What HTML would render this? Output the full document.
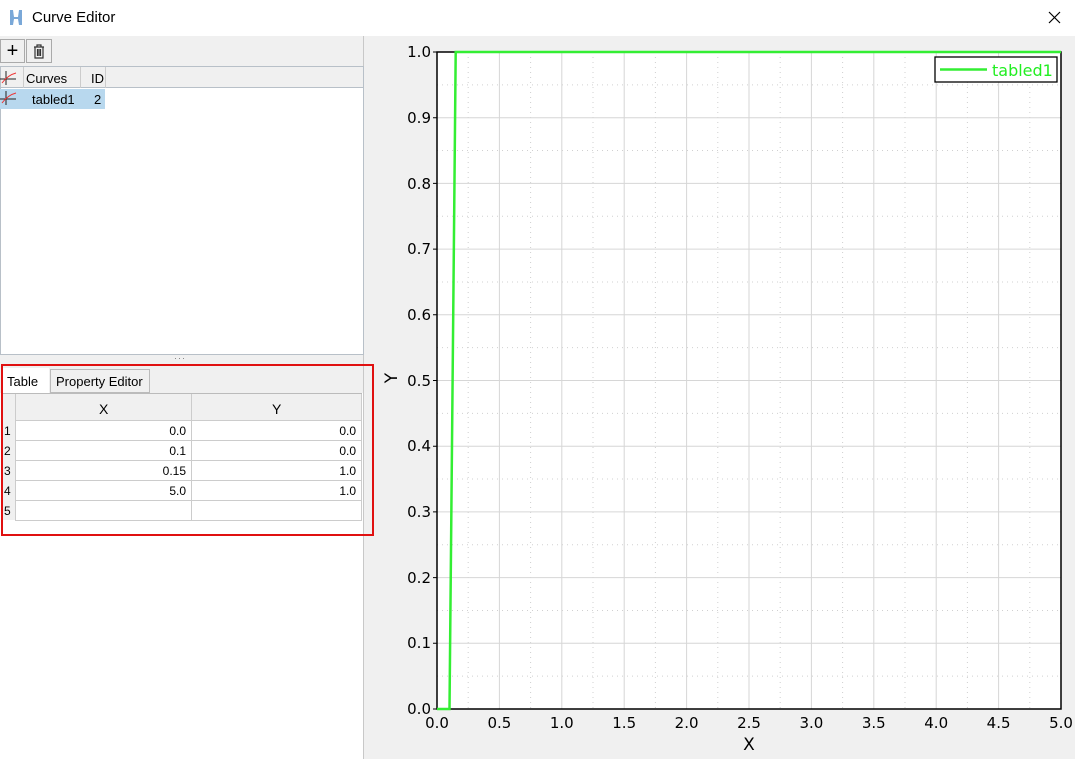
<!DOCTYPE html>
<html><head><style>
body{margin:0;width:1075px;height:759px;background:#f0f0f0;font-family:"Liberation Sans",sans-serif;position:relative;overflow:hidden}
.abs{position:absolute}
.title{left:0;top:0;width:1075px;height:36px;background:#fff}
</style></head><body>
<div class="abs title">
 <svg class="abs" style="left:9px;top:9px" width="14" height="17"><path d="M1 1 L4 1 L5 8 L9 8 L10 1 L13 1 L13 16 L10 16 L9 10 L5 10 L4 16 L1 16Z" fill="#7aa8d8"/></svg>
 <div class="abs" style="left:32px;top:9px;font-size:15px;color:#000">Curve Editor</div>
 <svg class="abs" style="left:1048px;top:11px" width="13" height="13"><path d="M1 1L12 12M12 1L1 12" stroke="#000" stroke-width="1.2"/></svg>
</div>
<div class="abs" style="left:0;top:36px;width:363px;height:723px;border-right:1px solid #c8c8c8"></div>
<div class="abs" style="left:0;top:393px;width:363px;height:366px;background:#fff;border-right:1px solid #c8c8c8"></div>
<div class="abs" style="left:0;top:39px;width:25px;height:24px;border:1px solid #aaa;box-sizing:border-box;background:#f0f0f0;font-size:20px;text-align:center;line-height:22px">+</div>
<div class="abs" style="left:26px;top:39px;width:26px;height:24px;border:1px solid #aaa;box-sizing:border-box;text-align:center">
 <svg width="14" height="16" style="margin-top:3px"><path d="M2 4H12M5 4V2H9V4M3 4V15H11V4M5.5 6V13M7 6V13M8.5 6V13" stroke="#333" fill="none" stroke-width="1.2"/></svg></div>
<div class="abs" style="left:0;top:66px;width:364px;height:289px;background:#fff;border:1px solid #b8c0c8;box-sizing:border-box"></div>
<div class="abs" style="left:0;top:66px;width:364px;height:22px;background:#f0f0f0;border:1px solid #b8c0c8;box-sizing:border-box"></div>
<div class="abs" style="left:23px;top:67px;height:21px;border-left:1px solid #ccc"></div>
<div class="abs" style="left:80px;top:67px;height:21px;border-left:1px solid #ccc"></div>
<div class="abs" style="left:105px;top:67px;height:21px;border-left:1px solid #ccc"></div>
<div class="abs" style="left:26px;top:71px;font-size:13px">Curves</div>
<div class="abs" style="left:91px;top:71px;font-size:13px">ID</div>
<div class="abs" style="left:0;top:89px;width:105px;height:20px;background:#b8d8ee"></div>
<svg class="abs" style="left:0;top:69px" width="18" height="40"><path d="M6 2V16M0 10H16" stroke="#222" fill="none"/><path d="M2 14Q8 6 16 4" stroke="#e33" fill="none"/><path d="M6 22V36M0 30H16" stroke="#222" fill="none"/><path d="M2 34Q8 26 16 24" stroke="#e33" fill="none"/></svg>
<div class="abs" style="left:32px;top:92px;font-size:13px">tabled1</div>
<div class="abs" style="left:94px;top:92px;font-size:13px">2</div>
<div class="abs" style="left:174px;top:353px;font-size:9px;color:#777;letter-spacing:1px">···</div>
<div class="abs" style="left:50px;top:369px;width:100px;height:24px;border:1px solid #bbb;box-sizing:border-box;background:#f0f0f0;font-size:13px;padding:4px 0 0 5px">Property Editor</div>
<div class="abs" style="left:2px;top:368px;width:47px;height:26px;background:#fff;font-size:13px;padding:6px 0 0 5px;box-sizing:border-box">Table</div>
<div class="abs" style="left:2px;top:393px;width:360px;height:141px;background:#fff;border-top:1px solid #bbb"></div>
<div class="abs" style="left:2px;top:394px;width:360px;height:26px;background:#f0f0f0;border-bottom:1px solid #ccc"></div>
<div class="abs" style="left:2px;top:394px;width:13px;height:126px;background:#f0f0f0;border-right:1px solid #ccc"></div>
<div class="abs" style="left:191px;top:394px;height:126px;border-left:1px solid #ccc"></div>
<div class="abs" style="left:361px;top:394px;height:126px;border-left:1px solid #ccc"></div>
<div class="abs" style="left:99px;top:401px;font-size:14px">X</div>
<div class="abs" style="left:272px;top:401px;font-size:14px">Y</div>
<div class="abs" style="left:15px;top:440px;width:347px;border-top:1px solid #ccc"></div>
<div class="abs" style="left:15px;top:460px;width:347px;border-top:1px solid #ccc"></div>
<div class="abs" style="left:15px;top:480px;width:347px;border-top:1px solid #ccc"></div>
<div class="abs" style="left:15px;top:500px;width:347px;border-top:1px solid #ccc"></div>
<div class="abs" style="left:15px;top:520px;width:347px;border-top:1px solid #ccc"></div>
<div class="abs" style="left:4px;top:421px;font-size:12px;line-height:20px">1<br>2<br>3<br>4<br>5</div>
<div class="abs" style="left:100px;top:421px;width:86px;text-align:right;font-size:12px;line-height:20px">0.0<br>0.1<br>0.15<br>5.0</div>
<div class="abs" style="left:270px;top:421px;width:86px;text-align:right;font-size:12px;line-height:20px">0.0<br>0.0<br>1.0<br>1.0</div>
<div class="abs" style="left:1px;top:364px;width:373px;height:172px;border:2px solid #e01010;box-sizing:border-box"></div>
<svg class="abs" style="left:0;top:0" width="1075" height="759" font-family="DejaVu Sans, sans-serif">
<rect x="437" y="52" width="624" height="657" fill="#fff"/>
<g stroke="#d0d0d0" stroke-dasharray="1,4">
<path d="M468.2 52V709M530.6 52V709M593 52V709M655.4 52V709M717.8 52V709M780.2 52V709M842.6 52V709M905 52V709M967.4 52V709M1029.8 52V709"/>
<path d="M437 676.15H1061M437 610.45H1061M437 544.75H1061M437 479.05H1061M437 413.35H1061M437 347.65H1061M437 281.95H1061M437 216.25H1061M437 150.55H1061M437 84.85H1061"/>
</g>
<g stroke="#d6d6d6">
<path d="M499.4 52V709M561.8 52V709M624.2 52V709M686.6 52V709M749 52V709M811.4 52V709M873.8 52V709M936.2 52V709M998.6 52V709"/>
<path d="M437 643.3H1061M437 577.6H1061M437 511.9H1061M437 446.2H1061M437 380.5H1061M437 314.8H1061M437 249.1H1061M437 183.4H1061M437 117.7H1061"/>
</g>
<g stroke="#000"><path d="M433 709H437M433 643.3H437M433 577.6H437M433 511.9H437M433 446.2H437M433 380.5H437M433 314.8H437M433 249.1H437M433 183.4H437M433 117.7H437M433 52H437"/></g>
<rect x="437" y="52" width="624" height="657" fill="none" stroke="#000" stroke-width="1.5"/>
<path d="M437 709H449.5L455.7 52H1061" stroke="#33ee33" stroke-width="2.5" fill="none"/>
<rect x="935" y="57" width="122" height="25" fill="#fff" stroke="#000" stroke-width="1.3"/>
<path d="M940 69.5H987" stroke="#33ee33" stroke-width="2.5"/>
<text x="992" y="76" font-size="16" fill="#22ee22">tabled1</text>
<g font-size="15" text-anchor="end" fill="#000">
<text x="431" y="714">0.0</text><text x="431" y="648">0.1</text><text x="431" y="583">0.2</text><text x="431" y="517">0.3</text><text x="431" y="451">0.4</text><text x="431" y="386">0.5</text><text x="431" y="320">0.6</text><text x="431" y="254">0.7</text><text x="431" y="189">0.8</text><text x="431" y="123">0.9</text><text x="431" y="57">1.0</text>
</g>
<g font-size="15" text-anchor="middle" fill="#000">
<text x="437" y="728">0.0</text><text x="499.4" y="728">0.5</text><text x="561.8" y="728">1.0</text><text x="624.2" y="728">1.5</text><text x="686.6" y="728">2.0</text><text x="749" y="728">2.5</text><text x="811.4" y="728">3.0</text><text x="873.8" y="728">3.5</text><text x="936.2" y="728">4.0</text><text x="998.6" y="728">4.5</text><text x="1061" y="728">5.0</text>
<text x="749" y="750" font-size="17">X</text>
<text x="0" y="0" font-size="17" transform="translate(397 378) rotate(-90)">Y</text>
</g>
</svg>
</body></html>
